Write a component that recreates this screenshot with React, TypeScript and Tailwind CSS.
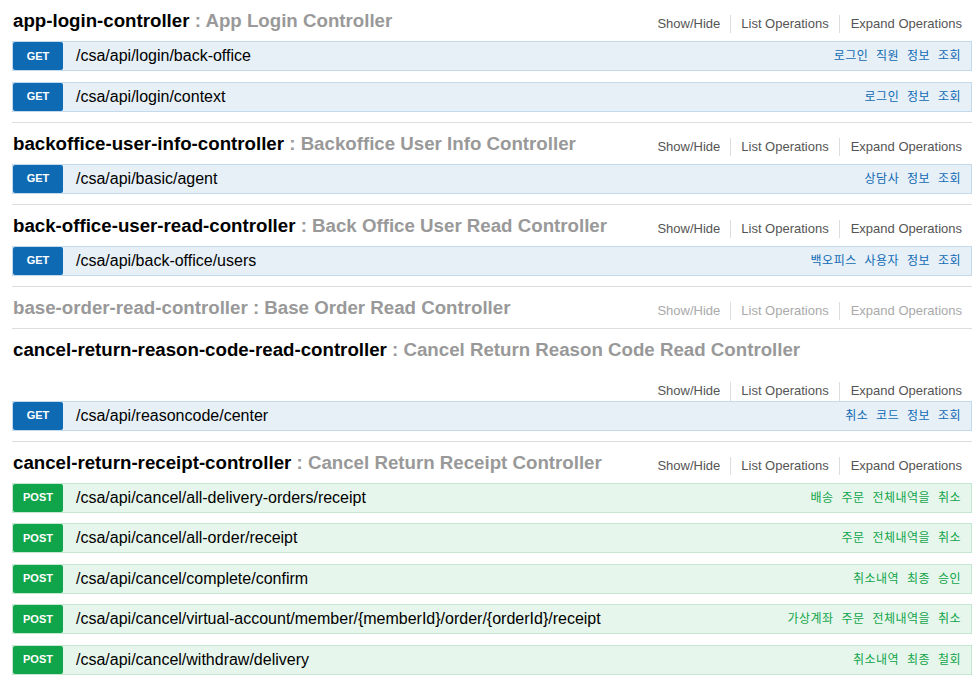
type Method = "GET" | "POST";

interface Operation {
  method: Method;
  path: string;
  summary: string;
}

interface Resource {
  name: string;
  desc: string;
  ops: Operation[];
  disabled?: boolean;
  wrapped?: boolean; // title too long, options drop to their own line
}

const resources: Resource[] = [
  {
    name: "app-login-controller",
    desc: "App Login Controller",
    ops: [
      { method: "GET", path: "/csa/api/login/back-office", summary: "로그인 직원 정보 조회" },
      { method: "GET", path: "/csa/api/login/context", summary: "로그인 정보 조회" },
    ],
  },
  {
    name: "backoffice-user-info-controller",
    desc: "Backoffice User Info Controller",
    ops: [{ method: "GET", path: "/csa/api/basic/agent", summary: "상담사 정보 조회" }],
  },
  {
    name: "back-office-user-read-controller",
    desc: "Back Office User Read Controller",
    ops: [{ method: "GET", path: "/csa/api/back-office/users", summary: "백오피스 사용자 정보 조회" }],
  },
  {
    name: "base-order-read-controller",
    desc: "Base Order Read Controller",
    ops: [],
    disabled: true,
  },
  {
    name: "cancel-return-reason-code-read-controller",
    desc: "Cancel Return Reason Code Read Controller",
    ops: [{ method: "GET", path: "/csa/api/reasoncode/center", summary: "취소 코드 정보 조회" }],
    wrapped: true,
  },
  {
    name: "cancel-return-receipt-controller",
    desc: "Cancel Return Receipt Controller",
    ops: [
      { method: "POST", path: "/csa/api/cancel/all-delivery-orders/receipt", summary: "배송 주문 전체내역을 취소" },
      { method: "POST", path: "/csa/api/cancel/all-order/receipt", summary: "주문 전체내역을 취소" },
      { method: "POST", path: "/csa/api/cancel/complete/confirm", summary: "취소내역 최종 승인" },
      {
        method: "POST",
        path: "/csa/api/cancel/virtual-account/member/{memberId}/order/{orderId}/receipt",
        summary: "가상계좌 주문 전체내역을 취소",
      },
      { method: "POST", path: "/csa/api/cancel/withdraw/delivery", summary: "취소내역 최종 철회" },
    ],
  },
];

const Options = ({ disabled, className = "" }: { disabled?: boolean; className?: string }) => {
  const color = disabled ? "text-[#aaa]" : "text-[#555]";
  return (
    <ul className={`flex text-[13px] leading-[18px] ${color} ${className}`}>
      <li className="px-[10px] border-r border-[#ddd]">Show/Hide</li>
      <li className="px-[10px] border-r border-[#ddd]">List Operations</li>
      <li className="pl-[11px] pr-[10px]">Expand Operations</li>
    </ul>
  );
};

const OperationRow = ({ op }: { op: Operation }) => {
  const isGet = op.method === "GET";
  return (
    <div
      className={`flex items-center h-[30px] mb-[10.5px] last:mb-[10px] border ${
        isGet ? "bg-[#e7f0f7] border-[#c3d9ec]" : "bg-[#e7f6ec] border-[#c3e8d1]"
      }`}
    >
      <span
        className={`w-[50px] h-full flex items-center justify-center rounded-[2px] text-white text-[11px] font-bold ${
          isGet ? "bg-[#0f6ab4]" : "bg-[#10a54a]"
        }`}
      >
        {op.method}
      </span>
      <span className="ml-[13px] text-[16px] text-black">{op.path}</span>
      <span
        className={`ml-auto pr-[10px] text-[12px] tracking-[0.5px] [word-spacing:4px] ${
          isGet ? "text-[#0f6ab4]" : "text-[#10a54a]"
        }`}
      >
        {op.summary}
      </span>
    </div>
  );
};

const ResourceSection = ({ res, first }: { res: Resource; first: boolean }) => {
  const heading = (
    <h2
      className={`h-[41px] leading-[41px] pl-px text-[18.7px] font-bold ${
        res.disabled ? "text-[#999]" : "text-black"
      }`}
    >
      {res.name}
      <span className="text-[#999]"> : {res.desc}</span>
    </h2>
  );

  return (
    <section className={first ? "" : "border-t border-[#ddd]"}>
      {res.wrapped ? (
        <>
          {heading}
          <div className="flex justify-end h-[31px] pt-[12px]">
            <Options disabled={res.disabled} />
          </div>
        </>
      ) : (
        <div className="flex items-start">
          {heading}
          <Options disabled={res.disabled} className="ml-auto mt-[15px]" />
        </div>
      )}
      <div>
        {res.ops.map((op) => (
          <OperationRow key={op.path} op={op} />
        ))}
      </div>
    </section>
  );
};

export default function App() {
  return (
    <div className="min-h-[693px] bg-white font-['Liberation_Sans','Noto_Sans_CJK_KR',sans-serif] pl-[12px]">
      <div className="w-[960px]">
        {resources.map((res, i) => (
          <ResourceSection key={res.name} res={res} first={i === 0} />
        ))}
      </div>
    </div>
  );
}
